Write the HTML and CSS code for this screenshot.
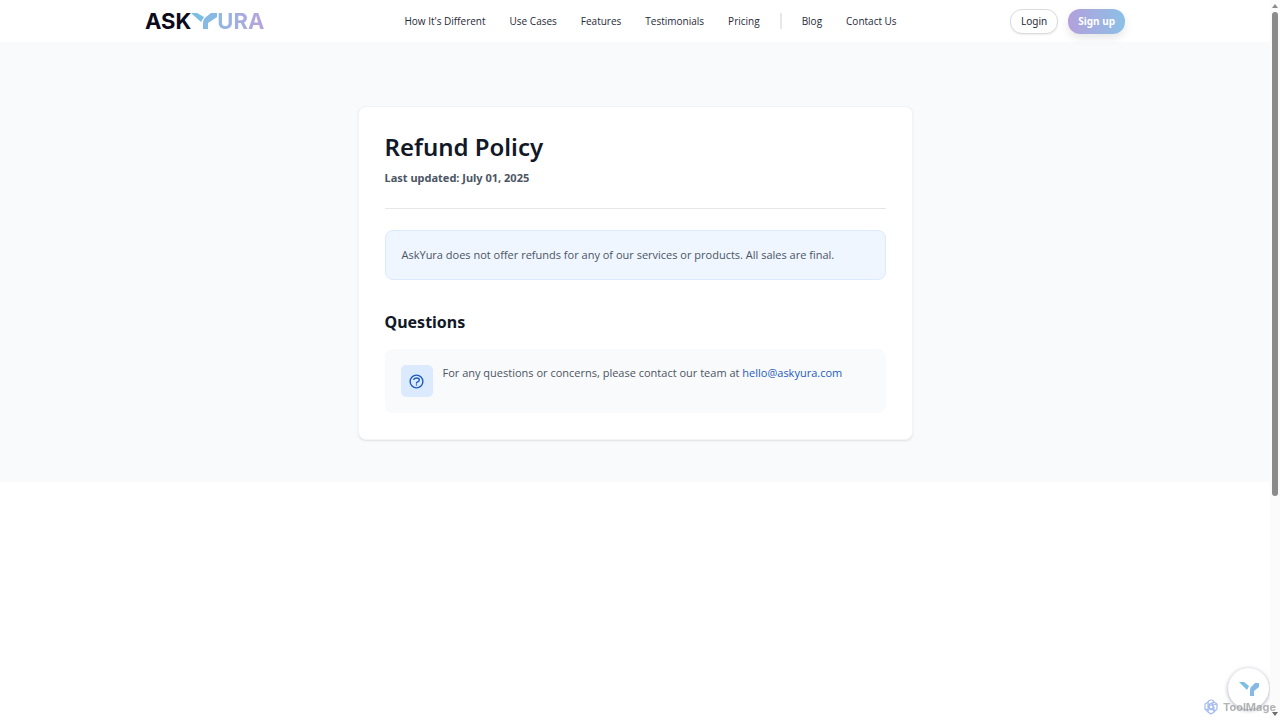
FILE: index.html
```html
<!DOCTYPE html>
<html lang="en">
<head>
    <meta charset="UTF-8">
    <meta name="viewport" content="width=device-width, initial-scale=1.0">
    <title>Refund Policy</title>
    <link rel="stylesheet" href="styles.css">
</head>
<body>
    <header class="header">
        <div class="header-inner">
            <a class="logo" href="#">
                <span class="logo-ask">ASK</span>
                <svg class="logo-mark" viewBox="0 0 26 16" aria-hidden="true">
                    <path fill="#79bfe3" d="M0 0h6l7 4-3 5z"/>
                    <path fill="#86b9e3" d="M26 0h-6l-5 4q-3 2-3 5v7h5v-6l9-6z"/>
                </svg>
                <span class="logo-ura">URA</span>
            </a>
            <nav class="nav">
                <a href="#">How It's Different</a>
                <a href="#">Use Cases</a>
                <a href="#">Features</a>
                <a href="#">Testimonials</a>
                <a href="#">Pricing</a>
                <span class="nav-divider"></span>
                <a href="#">Blog</a>
                <a href="#">Contact Us</a>
            </nav>
            <div class="actions">
                <button class="button button-login" type="button">Login</button>
                <button class="button button-signup" type="button">Sign up</button>
            </div>
        </div>
    </header>

    <main class="page">
        <article class="card">
            <div class="card-head">
                <h1>Refund Policy</h1>
                <p class="updated">Last updated: July 01, 2025</p>
            </div>
            <p class="notice">AskYura does not offer refunds for any of our services or products. All sales are final.</p>
            <h2>Questions</h2>
            <div class="contact">
                <div class="contact-icon">
                    <svg viewBox="0 0 24 24" aria-hidden="true">
                        <path d="M8.228 9c.549-1.165 2.03-2 3.772-2 2.21 0 4 1.343 4 3 0 1.4-1.278 2.575-3.006 2.907-.542.104-.994.54-.994 1.093m0 3h.01M21 12a9 9 0 11-18 0 9 9 0 0118 0z"/>
                    </svg>
                </div>
                <p>For any questions or concerns, please contact our team at <a href="mailto:hello@askyura.com">hello@askyura.com</a></p>
            </div>
        </article>
    </main>

    <button class="chat" type="button" aria-label="Open chat">
        <svg viewBox="0 0 20 14" aria-hidden="true">
            <path fill="#79bfe3" d="M0 0h5l5 4-2 4z"/>
            <path fill="#86b9e3" d="M20 1h-4l-3 3q-2 1-2 4v6h4V9l5-4z"/>
        </svg>
    </button>

    <div class="toolmage">
        <svg viewBox="0 0 16 16" aria-hidden="true">
            <g fill="none" stroke="#a3baf0" stroke-width="1.2">
                <path d="M8 1a3 3 0 0 1 3 2l3 2v5l-3 3-3 2-3-2-3-3V5l3-2a3 3 0 0 1 3-2z"/>
                <path d="M5 3v5l3 2 4 2M11 3L7 5 5 9v4M14 6l-4-1-5 0M2 10l4 1 5-1M11 13V8L9 5"/>
                <circle cx="8" cy="8" r="2"/>
            </g>
        </svg>
        <span>ToolMage</span>
    </div>

    <div class="scrollbar" aria-hidden="true">
        <span class="arrow arrow-up"></span>
        <span class="thumb"></span>
        <span class="arrow arrow-down"></span>
    </div>
</body>
</html>
```
FILE: styles.css
```css
* {
    box-sizing: border-box;
}

body {
    margin: 0;
    padding-right: 10px; /* Room for the scrollbar */
    background-color: #ffffff;
    color: #4b5563;
    font-family: "Open Sans", "Noto Sans", sans-serif;
    font-size: 11px;
    line-height: 16px;
}

h1, h2, p {
    margin: 0;
}

a {
    color: inherit;
    text-decoration: none;
}

.header {
    background-color: #ffffff;
}

.header-inner {
    display: flex;
    align-items: center;
    justify-content: space-between;
    max-width: 980px;
    height: 42px;
    margin: 0 auto;
}

.logo {
    display: flex;
    align-items: center;
    width: 146px;
    font-family: Inter, sans-serif;
    font-size: 22px;
    font-weight: 700;
    line-height: 24px;
}

.logo-ask {
    color: #0b0b1c;
}

.logo-mark {
    width: 26px;
    height: 16px;
}

.logo-ura {
    color: transparent;
    background: linear-gradient(90deg, #8fb8e3, #b9a3da);
    background-clip: text;
    -webkit-background-clip: text;
}

.nav {
    display: flex;
    align-items: center;
    gap: 24px;
    color: #1f2937;
    font-size: 10px;
    white-space: nowrap;
}

.nav-divider {
    width: 2px;
    height: 16px;
    margin: 0 -4px;
    background-color: #e5e7eb;
}

.actions {
    display: flex;
    gap: 10px;
}

.button {
    height: 25px;
    padding: 0 10px;
    border: 1px solid transparent;
    border-radius: 12px;
    font-family: "Noto Sans", sans-serif;
    font-size: 10px;
    cursor: pointer;
}

.button-login {
    border-color: #d9dbdf;
    background-color: #ffffff;
    color: #1f2937;
    box-shadow: 0 1px 2px rgba(0, 0, 0, 0.08);
}

.button-signup {
    border: none;
    background: linear-gradient(90deg, #b3a0dc, #8cc0e6);
    color: #ffffff;
    font-weight: 700;
    box-shadow: 0 4px 8px rgba(0, 0, 0, 0.1);
}

.page {
    padding: 64px 16px 42px;
    background-color: #f9fafb;
}

.card {
    max-width: 555px;
    margin: 0 auto;
    padding: 26px;
    border: 1px solid #f3f4f6;
    border-radius: 8px;
    background-color: #ffffff;
    box-shadow: 0 1px 2px rgba(0, 0, 0, 0.1);
}

.card-head {
    margin-bottom: 21px;
    padding-bottom: 22px;
    border-bottom: 1px solid #e5e7eb;
}

h1 {
    margin-bottom: 10px;
    color: #111827;
    font-family: "Noto Sans", sans-serif;
    font-size: 24px;
    font-weight: 600;
    line-height: 27px;
}

.updated {
    font-family: "Noto Sans", sans-serif;
    font-weight: 700;
}

.notice {
    padding: 16px;
    border: 1px solid #dbeafe;
    border-radius: 8px;
    background-color: #eff6ff;
}

h2 {
    margin: 32px 0 16px;
    color: #111827;
    font-family: "Noto Sans", sans-serif;
    font-size: 16px;
    line-height: 21px;
}

.contact {
    display: flex;
    gap: 10px;
    padding: 16px;
    border-radius: 8px;
    background-color: #f9fafb;
}

.contact a {
    color: #1d5bbf;
}

.contact-icon {
    display: flex;
    align-items: center;
    justify-content: center;
    flex-shrink: 0;
    width: 32px;
    height: 32px;
    border-radius: 5px;
    background-color: #dbeafe;
}

.contact-icon svg {
    width: 17px;
    height: 17px;
    fill: none;
    stroke: #1d5bbf;
    stroke-width: 2;
    stroke-linecap: round;
    stroke-linejoin: round;
}

/* Floating chat button */
.chat {
    display: flex;
    align-items: center;
    justify-content: center;
    position: fixed;
    right: 11px;
    bottom: 11px;
    width: 41px;
    height: 41px;
    padding: 0;
    border: none;
    border-radius: 50%;
    background-color: #ffffff;
    box-shadow: 0 1px 4px rgba(30, 40, 80, 0.4);
    cursor: pointer;
}

.chat svg {
    width: 20px;
    height: 14px;
}

.toolmage {
    display: flex;
    align-items: center;
    gap: 4px;
    position: fixed;
    right: 4px;
    bottom: 5px;
    z-index: 2;
    color: rgba(130, 130, 135, 0.6);
    font-family: Inter, sans-serif;
    font-size: 11px;
    font-weight: 700;
}

.toolmage svg {
    width: 16px;
    height: 16px;
}

.scrollbar {
    display: flex;
    flex-direction: column;
    align-items: center;
    position: fixed;
    top: 0;
    right: 0;
    bottom: 0;
    width: 10px;
    padding: 4px 0;
    background-color: #fbfbfb;
}

.thumb {
    width: 6px;
    height: 68%;
    margin-top: 4px;
    border-radius: 3px;
    background-color: #8b8b8b;
}

.arrow {
    border: 3px solid transparent;
}

.arrow-up {
    border-top: none;
    border-bottom: 4px solid #8b8b8b;
}

.arrow-down {
    margin-top: auto;
    border-bottom: none;
    border-top: 4px solid #6b6b6b;
}
```
